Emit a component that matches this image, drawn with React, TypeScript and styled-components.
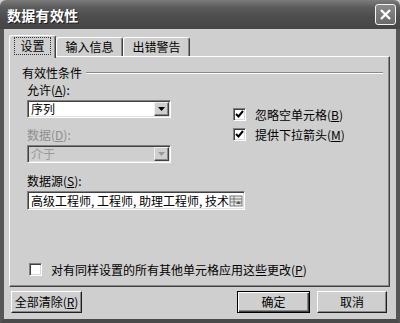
import React from 'react';
import styled, { createGlobalStyle } from 'styled-components';

const Global = createGlobalStyle`
  html, body { margin: 0; padding: 0; background: #cfcfcf; }
  body {
    font-family: "Noto Sans CJK SC", "DejaVu Sans", sans-serif;
    font-size: 12px;
    color: #000;
  }
  * { box-sizing: border-box; }
`;

const Window = styled.div`
  width: 400px;
  height: 323px;
  display: flex;
  flex-direction: column;
  background: #cfcfcf;
  overflow: hidden;
`;

const TitleBar = styled.div`
  height: 29px;
  flex: none;
  display: flex;
  align-items: center;
  justify-content: space-between;
  padding: 0 4px 0 7px;
  border-radius: 6px 6px 0 0;
  background: linear-gradient(#7c7c7c 0%, #5c5c5c 25%, #4c4c4c 60%, #454545 100%);
`;

const Title = styled.span`
  color: #fff;
  font-weight: bold;
  font-size: 14px;
  line-height: 16px;
  letter-spacing: 0.3px;
  text-shadow: 1px 1px 0 #1e1e1e;
`;

const CloseButton = styled.div`
  width: 21px;
  height: 21px;
  margin-top: -1px;
  border: 1px solid #f4f4f4;
  border-radius: 3px;
  background: linear-gradient(#8a8a8a, #6a6a6a);
  display: flex;
  align-items: center;
  justify-content: center;
`;

const Frame = styled.div`
  flex: 1;
  display: flex;
  flex-direction: column;
  border-left: 4px solid #555;
  border-right: 4px solid #555;
  border-bottom: 4px solid #4a4a4a;
  padding: 6px 6px 6px 5px;
  background: #cfcfcf;
`;

const TabStrip = styled.div`
  display: flex;
  align-items: flex-end;
  height: 23px;
  margin-bottom: -2px;
  position: relative;
  z-index: 1;
`;

const Tab = styled.div<{ $active?: boolean; $w: number }>`
  width: ${(p) => p.$w}px;
  height: ${(p) => (p.$active ? 23 : 19)}px;
  margin-bottom: ${(p) => (p.$active ? 0 : 2)}px;
  background: #cfcfcf;
  border-top: 1px solid #fff;
  border-left: 1px solid #fff;
  border-right: 1px solid #404040;
  box-shadow: inset -1px 0 0 #888;
  border-radius: 3px 3px 0 0;
  display: flex;
  align-items: center;
  justify-content: center;
  line-height: 14px;
  padding-bottom: ${(p) => (p.$active ? 2 : 0)}px;
`;

const FocusLabel = styled.span`
  outline: 1px dotted #333;
  padding: 1px 5px;
`;

const Panel = styled.div`
  width: 381px;
  height: 231px;
  display: flex;
  flex-direction: column;
  border-top: 1px solid #fff;
  border-left: 1px solid #fff;
  border-right: 1px solid #404040;
  border-bottom: 1px solid #404040;
  box-shadow: inset -1px -1px 0 #888;
  padding: 9px 6px 10px 12px;
`;

const GroupHeader = styled.div`
  display: flex;
  align-items: center;
  height: 14px;
  line-height: 14px;
`;

const GroupLine = styled.div`
  flex: 1;
  margin-left: 4px;
  height: 2px;
  border-top: 1px solid #888;
  border-bottom: 1px solid #fff;
`;

const GroupBody = styled.div`
  padding-left: 5px;
  display: flex;
  flex-direction: column;
`;

const Columns = styled.div`
  display: flex;
`;

const LeftColumn = styled.div`
  width: 144px;
  display: flex;
  flex-direction: column;
`;

const RightColumn = styled.div`
  margin-left: 62px;
  padding-top: 28px;
  display: flex;
  flex-direction: column;
  gap: 7px;
`;

const FieldLabel = styled.div<{ $disabled?: boolean; $top: number }>`
  margin-top: ${(p) => p.$top}px;
  margin-bottom: 3px;
  line-height: 14px;
  height: 14px;
  color: ${(p) => (p.$disabled ? '#8e8e8e' : '#000')};
`;

const Sunken = styled.div<{ $w: number; $h: number; $disabled?: boolean }>`
  width: ${(p) => p.$w}px;
  height: ${(p) => p.$h}px;
  display: flex;
  align-items: center;
  border: 1px solid;
  border-color: #808080 #fff #fff #808080;
  box-shadow: inset 1px 1px 0 #404040, inset -1px -1px 0 #e0e0e0;
  background: ${(p) => (p.$disabled ? '#cfcfcf' : '#fff')};
  color: ${(p) => (p.$disabled ? '#9a9a9a' : '#000')};
  padding: 0 1px 0 3px;
`;

const FieldText = styled.span<{ $clip?: boolean }>`
  flex: 1;
  min-width: 0;
  line-height: 16px;
  white-space: nowrap;
  overflow: ${(p) => (p.$clip ? 'hidden' : 'visible')};
`;

const DropButton = styled.div`
  width: 15px;
  height: 14px;
  flex: none;
  background: #cfcfcf;
  border: 1px solid;
  border-color: #f0f0f0 #404040 #404040 #f0f0f0;
  box-shadow: inset -1px -1px 0 #888;
  display: flex;
  align-items: center;
  justify-content: center;
`;

const CheckRow = styled.label`
  display: flex;
  align-items: center;
  height: 13px;
  line-height: 14px;
`;

const CheckBox = styled.span`
  width: 13px;
  height: 13px;
  flex: none;
  background: #fff;
  border: 1px solid;
  border-color: #808080 #fff #fff #808080;
  box-shadow: inset 1px 1px 0 #404040, inset -1px -1px 0 #d8d8d8;
  display: flex;
  align-items: center;
  justify-content: center;
  margin-right: 9px;
`;

const Spacer = styled.div`
  flex: 1;
`;

const ApplyRow = styled(CheckRow)`
  margin-left: 7px;
`;

const ButtonRow = styled.div`
  display: flex;
  align-items: center;
  margin-top: 4px;
  padding: 0 3px 0 2px;
`;

const Button = styled.div<{ $w: number; $default?: boolean }>`
  width: ${(p) => p.$w}px;
  height: 22px;
  display: flex;
  align-items: center;
  justify-content: center;
  line-height: 14px;
  background: #cfcfcf;
  border: 1px solid;
  border-color: ${(p) => (p.$default ? '#000' : '#fff #202020 #202020 #fff')};
  box-shadow: ${(p) =>
    p.$default
      ? 'inset 1px 1px 0 #fff, inset -1px -1px 0 #404040, inset -2px -2px 0 #888'
      : 'inset -1px -1px 0 #888'};
`;

const ButtonGap = styled.div`
  width: 7px;
`;

const Check = () => (
  <svg width="9" height="9" viewBox="0 0 9 9">
    <path d="M1 4 L3.5 6.5 L8 1" stroke="#000" strokeWidth="2" fill="none" />
  </svg>
);

const Arrow = ({ color }: { color: string }) => (
  <svg width="7" height="4" viewBox="0 0 7 4">
    <path d="M0 0 H7 L3.5 4 Z" fill={color} />
  </svg>
);

const RefIcon = () => (
  <svg width="14" height="12" viewBox="0 0 14 12" style={{ flex: 'none' }}>
    <rect x="1" y="1" width="12" height="10" fill="#e8e8e8" stroke="#777" />
    <line x1="1" y1="4" x2="13" y2="4" stroke="#777" />
    <line x1="1" y1="7" x2="13" y2="7" stroke="#777" />
    <line x1="5" y1="1" x2="5" y2="11" stroke="#777" />
    <path d="M7 9 L12 9 L9.5 6 Z" fill="#555" />
  </svg>
);

export default function App() {
  return (
    <>
      <Global />
      <Window>
        <TitleBar>
          <Title>数据有效性</Title>
          <CloseButton>
            <svg width="13" height="13" viewBox="0 0 13 13">
              <path d="M2 2 L11 11 M11 2 L2 11" stroke="#fff" strokeWidth="2.4" />
            </svg>
          </CloseButton>
        </TitleBar>
        <Frame>
          <TabStrip>
            <Tab $active $w={47}>
              <FocusLabel>设置</FocusLabel>
            </Tab>
            <Tab $w={67}>输入信息</Tab>
            <Tab $w={67}>出错警告</Tab>
          </TabStrip>
          <Panel>
            <GroupHeader>
              有效性条件
              <GroupLine />
            </GroupHeader>
            <GroupBody>
              <Columns>
                <LeftColumn>
                  <FieldLabel $top={3}>
                    允许(<u>A</u>):
                  </FieldLabel>
                  <Sunken $w={144} $h={18}>
                    <FieldText>序列</FieldText>
                    <DropButton>
                      <Arrow color="#000" />
                    </DropButton>
                  </Sunken>
                  <FieldLabel $top={10} $disabled>
                    数据(<u>D</u>):
                  </FieldLabel>
                  <Sunken $w={144} $h={18} $disabled>
                    <FieldText>介于</FieldText>
                    <DropButton>
                      <Arrow color="#999" />
                    </DropButton>
                  </Sunken>
                </LeftColumn>
                <RightColumn>
                  <CheckRow>
                    <CheckBox>
                      <Check />
                    </CheckBox>
                    忽略空单元格(<u>B</u>)
                  </CheckRow>
                  <CheckRow>
                    <CheckBox>
                      <Check />
                    </CheckBox>
                    提供下拉箭头(<u>M</u>)
                  </CheckRow>
                </RightColumn>
              </Columns>
              <FieldLabel $top={11}>
                数据源(<u>S</u>):
              </FieldLabel>
              <Sunken $w={218} $h={19}>
                <FieldText $clip>高级工程师, 工程师, 助理工程师, 技术员</FieldText>
                <RefIcon />
              </Sunken>
            </GroupBody>
            <Spacer />
            <ApplyRow>
              <CheckBox />
              对有同样设置的所有其他单元格应用这些更改(<u>P</u>)
            </ApplyRow>
          </Panel>
          <ButtonRow>
            <Button $w={71}>
              全部清除(<u>R</u>)
            </Button>
            <Spacer />
            <Button $w={73} $default>
              确定
            </Button>
            <ButtonGap />
            <Button $w={70}>取消</Button>
          </ButtonRow>
        </Frame>
      </Window>
    </>
  );
}
